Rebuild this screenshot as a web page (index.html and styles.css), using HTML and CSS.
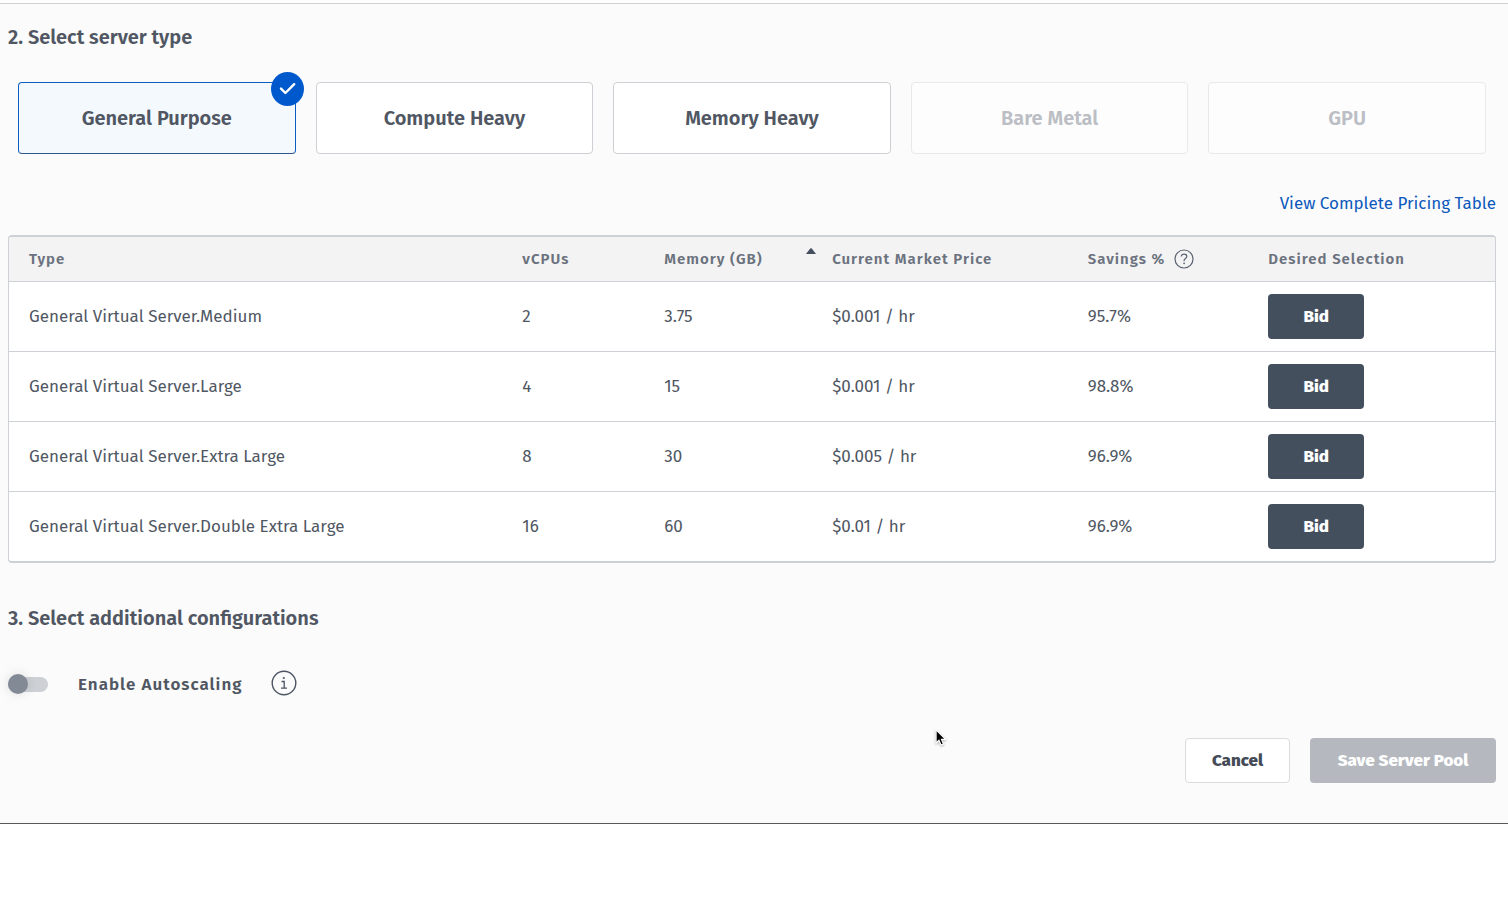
FILE: index.html
```html
<!DOCTYPE html>
<html lang="en">
<head>
<meta charset="utf-8">
<title>Server Pool</title>
<link rel="stylesheet" href="styles.css">
</head>
<body>
<main class="panel">
  <section class="section">
    <h2 class="heading">2. Select server type</h2>
    <div class="types">
      <button class="type type-selected" type="button" aria-pressed="true">General Purpose
        <svg class="type-check" viewBox="0 0 33 34" aria-hidden="true"><ellipse cx="16.5" cy="17" rx="16.5" ry="17" fill="#0059cc"/><path d="M10 16.6l4.400 4.400 8.800-8.800" fill="none" stroke="#fff" stroke-width="2.400" stroke-linecap="round" stroke-linejoin="round"/></svg>
      </button>
      <button class="type" type="button" aria-pressed="false">Compute Heavy</button>
      <button class="type" type="button" aria-pressed="false">Memory Heavy</button>
      <button class="type" type="button" disabled>Bare Metal</button>
      <button class="type" type="button" disabled>GPU</button>
    </div>
    <div class="pricing"><a class="pricing-link" href="#">View Complete Pricing Table</a></div>
    <div class="table-frame">
      <table class="servers">
        <colgroup><col class="col-type"><col class="col-cpu"><col class="col-memory"><col class="col-price"><col class="col-savings"><col class="col-selection"></colgroup>
        <thead>
          <tr>
            <th scope="col">Type</th>
            <th scope="col">vCPUs</th>
            <th scope="col" aria-sort="ascending"><div class="th-line th-spread">Memory (GB)<svg class="sort" viewBox="0 0 10 6" aria-hidden="true"><path d="M0 6L4.2.6Q5-.2 5.8.6L10 6z" fill="#444f5e"/></svg></div></th>
            <th scope="col">Current Market Price</th>
            <th scope="col"><div class="th-line">Savings %<svg class="help" viewBox="0 0 20 20" aria-hidden="true"><g fill="none" stroke="#5b6371" stroke-width="1.2"><circle cx="10" cy="10" r="9"/><path d="M7.2 7.5C7.4 5.9 8.500 5.200 10 5.200c1.700 0 2.800.9 2.800 2.300 0 2-2.700 2.100-2.700 4.100v.6"/></g><circle cx="10.100" cy="14.300" r=".9" fill="#5b6371"/></svg></div></th>
            <th scope="col">Desired Selection</th>
          </tr>
        </thead>
        <tbody>
          <tr><td>General Virtual Server.Medium</td><td>2</td><td>3.75</td><td>$0.001 / hr</td><td>95.7%</td><td><button class="button button-bid" type="button">Bid</button></td></tr>
          <tr><td>General Virtual Server.Large</td><td>4</td><td>15</td><td>$0.001 / hr</td><td>98.8%</td><td><button class="button button-bid" type="button">Bid</button></td></tr>
          <tr><td>General Virtual Server.Extra Large</td><td>8</td><td>30</td><td>$0.005 / hr</td><td>96.9%</td><td><button class="button button-bid" type="button">Bid</button></td></tr>
          <tr><td>General Virtual Server.Double Extra Large</td><td>16</td><td>60</td><td>$0.01 / hr</td><td>96.9%</td><td><button class="button button-bid" type="button">Bid</button></td></tr>
        </tbody>
      </table>
    </div>
  </section>
  <section class="section section-config">
    <h2 class="heading">3. Select additional configurations</h2>
    <div class="autoscaling">
      <input class="switch" id="autoscaling" type="checkbox" role="switch">
      <label class="switch-label" for="autoscaling">Enable Autoscaling</label>
      <svg class="info" viewBox="0 0 26 26" aria-hidden="true"><circle cx="13" cy="13" r="11.800" fill="none" stroke="#4b5563" stroke-width="1.400"/><circle cx="12.800" cy="8" r="1.100" fill="#4b5563"/><path d="M10.500 11.500h2.700v6.500M10 18.200h6" fill="none" stroke="#4b5563" stroke-width="1.300"/></svg>
    </div>
  </section>
  <footer class="actions">
    <button class="button button-cancel" type="button">Cancel</button>
    <button class="button button-save" type="button" disabled>Save Server Pool</button>
  </footer>
</main>
<svg class="pointer" viewBox="0 0 14 20" aria-hidden="true"><path d="M1 1v14.500l3.200-3 2.300 5.200 2.600-1.100-2.200-5.100h4.600z" fill="#000" stroke="#fff" stroke-width="1.200"/></svg>
</body>
</html>
```
FILE: styles.css
```css
* {
  box-sizing: border-box;
}

body {
  margin: 0;
  padding-top: 3px;
  background: #fff;
  color: #505763;
  font-family: "Fira Sans", "Noto Sans", sans-serif;
  font-size: 17px;
  line-height: 24px;
}

button {
  font: inherit;
  color: inherit;
}

.panel {
  padding: 19px 12px 40px 8px;
  background: #fbfbfb;
  border-top: 1px solid #ced0d3;
  border-bottom: 1px solid #56585c;
}

.heading {
  margin: 0;
  font-size: 20px;
  font-weight: 600;
  line-height: 28px;
}

.types {
  display: grid;
  grid-template-columns: repeat(5, 1fr);
  gap: 20px;
  padding: 0 10px;
  margin-top: 31px;
}

.type {
  position: relative;
  height: 72px;
  padding: 0 16px;
  background: #fff;
  border: 1px solid #cdd0d4;
  border-radius: 4px;
  font-size: 20px;
  font-weight: 600;
}

.type-selected {
  background: #f4f9fe;
  border-color: #0b5ec4;
  border-bottom-color: #2f5788;
}

.type:disabled {
  background: #fdfdfd;
  border-color: #e8e9ea;
  color: #bbbec4;
}

.type-check {
  position: absolute;
  top: -11px;
  right: -9px;
  width: 33px;
  height: 34px;
}

.pricing {
  margin: 38px 0 19px;
  text-align: right;
}

.pricing-link {
  color: #0b59bd;
  text-decoration: none;
}

.table-frame {
  overflow: hidden;
  background: #fff;
  border: 1px solid #cdd0d4;
  border-width: 2px 1px;
  border-radius: 4px;
}

.servers {
  width: 100%;
  table-layout: fixed;
  border-collapse: separate;
  border-spacing: 0;
}

.col-type { width: 33.2%; }
.col-cpu { width: 9.55%; }
.col-memory { width: 11.3%; }
.col-price { width: 17.2%; }
.col-savings { width: 12.15%; }
.col-selection { width: 16.6%; }

.servers th {
  height: 45px;
  padding: 0 0 0 20px;
  background: #f3f3f3;
  border-bottom: 1px solid #cdd0d4;
  color: #6b727e;
  font-size: 15px;
  font-weight: 600;
  letter-spacing: 1px;
  text-align: left;
}

.servers td {
  height: 70px;
  padding: 0 0 0 20px;
  border-bottom: 1px solid #cdd0d4;
}

.servers tbody tr:last-child td {
  height: 69px;
  border-bottom: 0;
}

.th-line {
  display: flex;
  align-items: center;
  gap: 9px;
}

.th-spread {
  justify-content: space-between;
}

.sort {
  align-self: flex-start;
  width: 10px;
  height: 6px;
  margin: 1px -4px 0 0;
}

.help {
  width: 20px;
  height: 20px;
}

.button {
  height: 45px;
  padding: 0 20px;
  border: 1px solid transparent;
  border-radius: 4px;
  font-weight: 800;
}

.button-bid {
  display: block;
  width: 96px;
  background: #444f5e;
  color: #fff;
}

.section-config {
  margin-top: 41px;
}

.autoscaling {
  display: flex;
  align-items: center;
  margin-top: 37px;
}

.switch {
  appearance: none;
  display: flex;
  align-items: center;
  width: 40px;
  height: 15px;
  margin: 2px 0 0;
  border-radius: 8px;
  background: #cdd0d4;
}

.switch::before {
  content: "";
  width: 20px;
  height: 20px;
  flex: none;
  border-radius: 50%;
  background: #828a96;
  box-shadow: 0 0 12px rgba(0, 0, 0, 0.12);
}

.switch-label {
  padding-top: 4px;
  margin: 0 28px 0 30px;
  font-weight: 600;
  letter-spacing: 1px;
}

.info {
  width: 26px;
  height: 26px;
}

.actions {
  display: flex;
  justify-content: flex-end;
  gap: 20px;
  margin-top: 41px;
}

.button-cancel {
  min-width: 105px;
  background: #fff;
  border-color: #d9dbde;
  color: #444b57;
}

.button-save {
  min-width: 186px;
  background: #b5b9bf;
  color: #fff;
}

.pointer {
  position: absolute;
  top: 729px;
  left: 935px;
  width: 13px;
  height: 18px;
  filter: drop-shadow(0 1px 1px rgba(0, 0, 0, 0.3));
}
```
